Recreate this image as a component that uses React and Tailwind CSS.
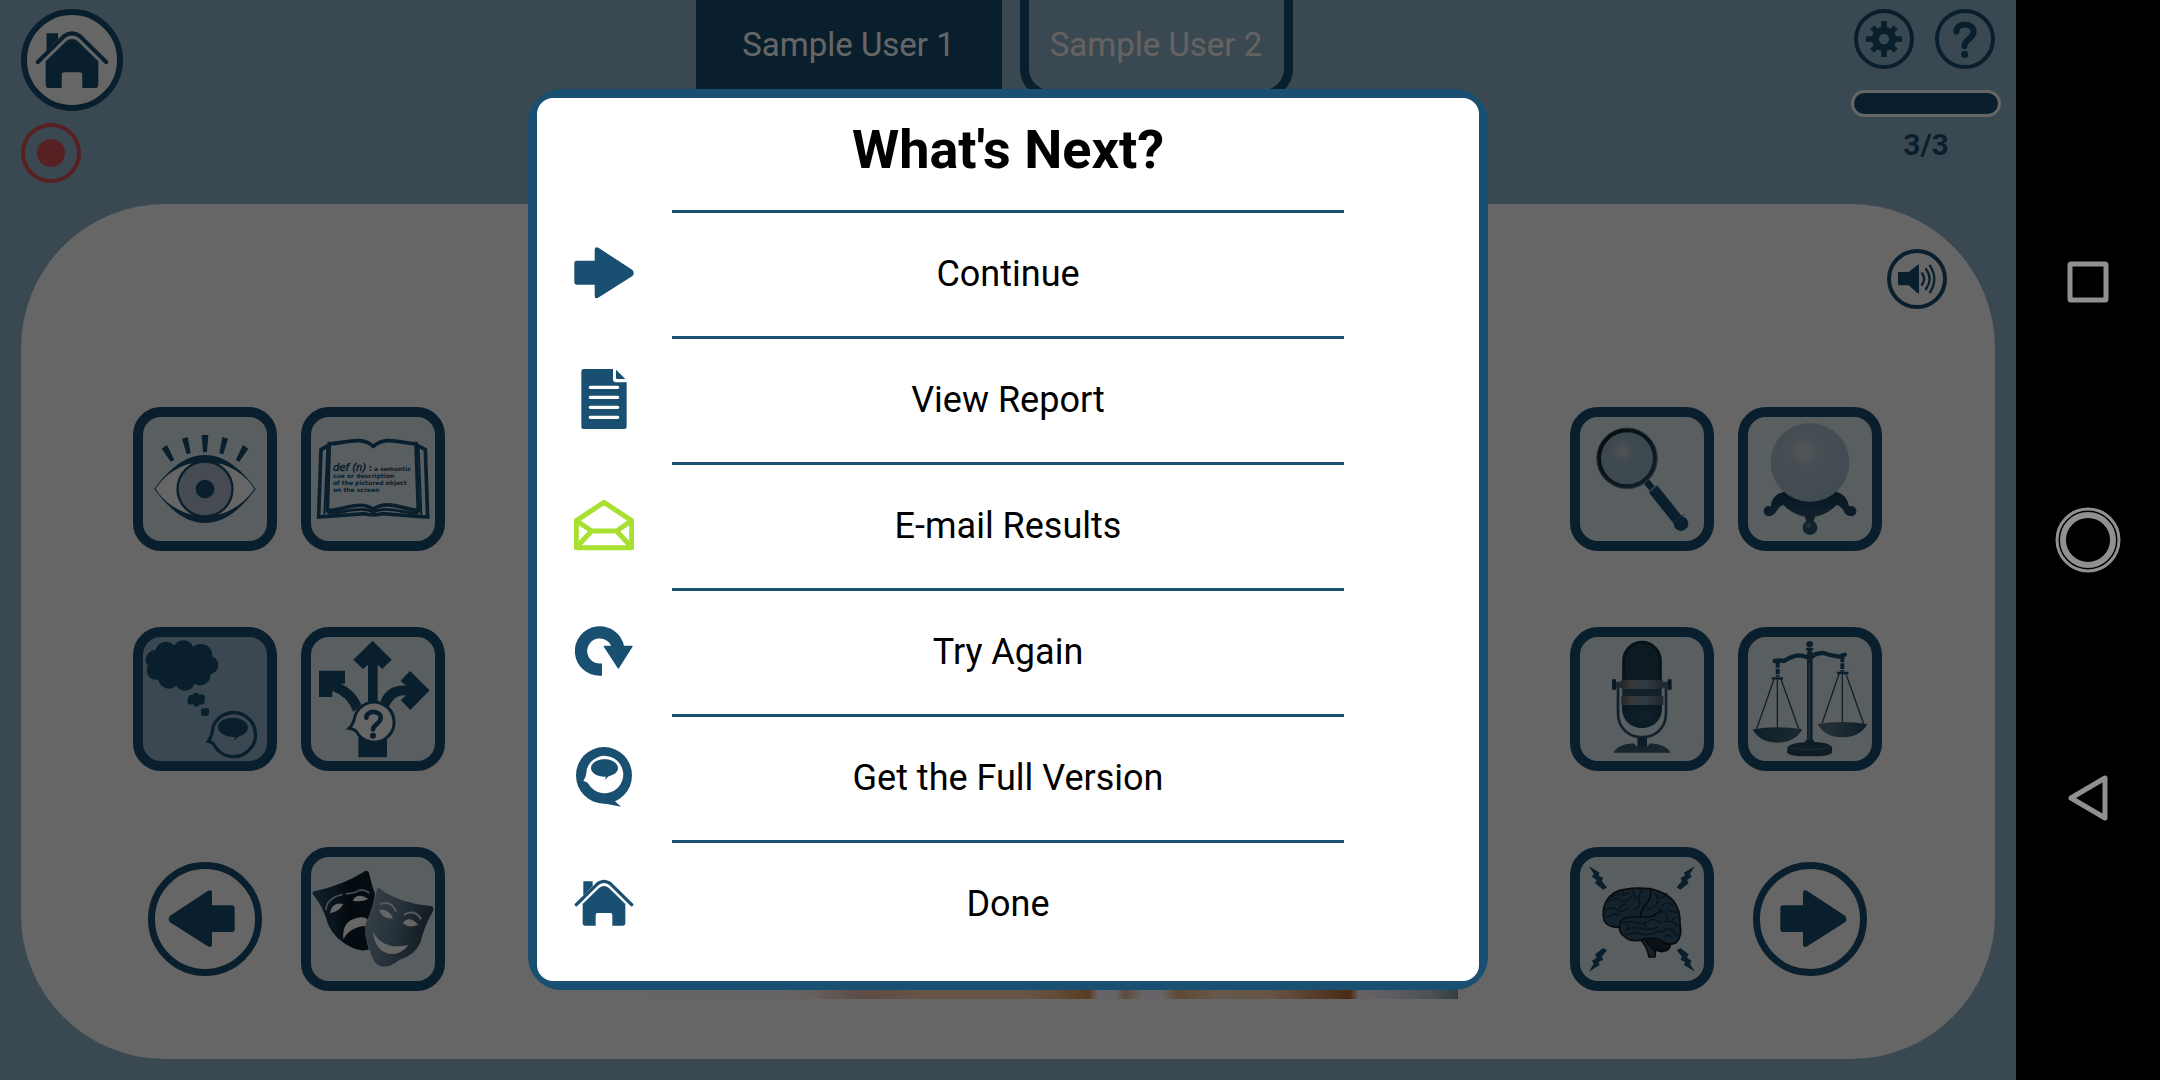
import React from "react";

const NAVY = "#194f70";

/* ---------- small icons ---------- */

function ArrowIcon({ className, viewBox }) {
  return (
    <svg viewBox={viewBox} className={className} fill={NAVY} aria-hidden="true">
      <path d="M150 257L262 184Q276 176 276 190V226H336Q344 226 344 234V298Q344 306 336 306H276V342Q276 356 262 348L150 277Q142 267 150 257Z" />
    </svg>
  );
}

function HouseIcon({ className }) {
  return (
    <svg viewBox="162 819 180 180" className={className} fill={NAVY} aria-hidden="true">
      <path d="M169 914L233 851Q252 837 271 851L335 914" fill="none" stroke={NAVY} strokeWidth="10" strokeLinecap="round" />
      <path d="M190 844H218V858L190 887Z" />
      <path d="M188 912L237 864Q252 852 267 864L316 912V970Q316 977 309 977H277V945Q277 939 271 939H233Q227 939 227 945V977H195Q188 977 188 970Z" />
    </svg>
  );
}

function ReportIcon({ className }) {
  return (
    <svg viewBox="162 447 180 180" className={className} fill={NAVY} aria-hidden="true">
      <path d="M192 447H279V478Q279 487 288 487H320V620Q320 627 313 627H192Q184 627 184 620V455Q184 447 192 447Z" />
      <path d="M288 449L316 477H291Q288 477 288 474Z" />
      <path d="M211 502H293M211 532H293M211 562H293M211 592H293" stroke="#fff" strokeWidth="10" strokeLinecap="round" />
    </svg>
  );
}

function MailIcon({ className }) {
  return (
    <svg viewBox="162 825 180 180" className={className} fill="none" stroke="#a8df30" strokeWidth="15" strokeLinejoin="round" aria-hidden="true">
      <path d="M169 902L252 847L335 902V983H169Z" />
      <path d="M169 902L215 933H290L335 902M215 933L170 981M290 933L334 981" />
    </svg>
  );
}

function RetryIcon({ className }) {
  return (
    <svg viewBox="162 63 180 180" className={className} aria-hidden="true">
      <path d="M246 209H240A56 56 0 1 1 294 142" fill="none" stroke={NAVY} strokeWidth="37" />
      <path d="M253 139H336L295 204Z" fill={NAVY} stroke={NAVY} strokeWidth="4" strokeLinejoin="round" />
    </svg>
  );
}

function ThinkHeadIcon({ className }) {
  return (
    <svg viewBox="162 441 180 180" className={className} aria-hidden="true">
      <ellipse cx="252" cy="526" rx="84" ry="85" fill={NAVY} />
      <path d="M284 603L303 620L250 610Z" fill={NAVY} />
      <path d="M200 508A56 56 0 1 1 205 551Q202 545 190 543Q200 528 200 508Z" fill="#fff" />
      <path d="M254 478C276 478 294 490 294 504S280 525 266 529L254 540L258 530C232 531 213 519 213 504S232 478 254 478Z" fill={NAVY} />
    </svg>
  );
}

function GearIcon() {
  return (
    <svg viewBox="-78 -78 156 156" className="size-full" stroke={NAVY} aria-hidden="true">
      <circle r="26" fill="none" strokeWidth="21" />
      {[0, 45, 90, 135, 180, 225, 270, 315].map((a) => (
        <path key={a} d={a % 90 ? "M0 -32V-50" : "M0 -32V-54"} strokeWidth="17" transform={`rotate(${a})`} />
      ))}
    </svg>
  );
}

function HelpIcon() {
  return (
    <svg viewBox="417 39 156 156" className="size-full" aria-hidden="true">
      <path d="M469 95C469 66 522 66 521 96C520 117 494 118 493 138" fill="none" stroke={NAVY} strokeWidth="18" strokeLinecap="round" />
      <circle cx="494" cy="163" r="11" fill={NAVY} />
    </svg>
  );
}

function SpeakerIcon() {
  return (
    <svg viewBox="273 759 156 156" className="size-full" aria-hidden="true">
      <path d="M298 816H326L353 794Q357 792 357 797V877Q357 882 353 880L326 856H298Q294 856 294 852V820Q294 816 298 816Z" fill={NAVY} />
      <path d="M366 820Q379 837 366 854M378 807Q400 837 378 867M390 797Q416 837 390 877" fill="none" stroke={NAVY} strokeWidth="7" strokeLinecap="round" />
    </svg>
  );
}

/* ---------- tile drawings ---------- */

function Eye() {
  const lashes = "M186 146L203 141L212 190L200 193ZM125 176L141 165L163 210L152 215Z";
  return (
    <svg viewBox="69 81 372 372" className="size-full" fill={NAVY} aria-hidden="true">
      <path d="M103 297C150 232 200 195 255 195S360 232 407 297C360 362 310 399 255 399S150 362 103 297Z" />
      <path d="M107 297Q140 243 207 221H303Q372 245 403 297Q365 352 300 373H210Q142 352 107 297Z" fill="#fff" />
      <circle cx="255" cy="297" r="86" />
      <circle cx="255" cy="297" r="79" fill="#adbccb" />
      <circle cx="255" cy="297" r="28" />
      <path d="M245 135H265L261 187H249Z" />
      <path d={lashes} />
      <path d={lashes} transform="matrix(-1 0 0 1 510 0)" />
    </svg>
  );
}

function Book() {
  return (
    <svg viewBox="573 81 372 372" className="size-full" aria-hidden="true">
      <g fill="none" stroke={NAVY} strokeWidth="11">
        <path d="M628 164L603 179L596 381L735 371Q759 379 785 371L923 381L916 179L888 164" />
        <path d="M628 161C670 162 722 135 760 169C798 135 850 162 888 161L895 362C850 358 800 328 760 358C720 328 670 362 622 362Z" />
        <path d="M622 172L613 374M896 172L904 374" strokeWidth="6" />
        <path d="M622 370C670 370 730 345 760 368C790 345 850 370 895 370" strokeWidth="8" />
      </g>
      <g fill={NAVY} fontFamily="'DejaVu Sans', sans-serif" fontWeight="700">
        <text x="639" y="243" fontSize="30" fontStyle="italic" fontWeight="400" stroke={NAVY} strokeWidth="1.5">def (n)</text>
        <text x="746" y="243" fontSize="24">:</text>
        <text x="762" y="243" fontSize="18">a semantic</text>
        <text x="639" y="264" fontSize="18">cue or description</text>
        <text x="639" y="286" fontSize="18">of the pictured object</text>
        <text x="639" y="307" fontSize="18">on the screen</text>
      </g>
    </svg>
  );
}

function Thought() {
  const puffs = [
    [108, 150, 31], [138, 127, 32], [190, 123, 32], [243, 136, 34], [267, 165, 28],
    [240, 194, 32], [195, 211, 31], [147, 204, 32], [108, 182, 28],
    [214, 265, 10], [228, 258, 10], [244, 264, 11], [244, 274, 10], [229, 280, 10], [212, 274, 10],
    [251, 303, 8], [260, 302, 8], [260, 311, 7], [250, 311, 7],
  ];
  return (
    <svg viewBox="69 81 372 372" className="size-full" fill={NAVY} aria-hidden="true">
      <ellipse cx="187" cy="167" rx="85" ry="50" />
      <ellipse cx="228" cy="269" rx="20" ry="12" />
      {puffs.map(([x, y, r]) => (
        <circle key={`${x}-${y}`} cx={x} cy={y} r={r} />
      ))}
      <path d="M279 350A66 66 0 1 1 284 408Q280 397 265 394Q278 374 279 350Z" fill="none" stroke={NAVY} strokeWidth="10" />
      <path d="M339 323C364 323 384 336 384 351S372 375 357 379L341 392L346 381C314 382 294 368 294 351S314 323 339 323Z" />
    </svg>
  );
}

function Choices() {
  return (
    <svg viewBox="573 81 372 372" className="size-full" fill={NAVY} aria-hidden="true">
      <path d="M758 92L815 149L787 177L773 164V290H744V164L729 177L700 149Z" />
      <path d="M597 182H675V221H662Q704 238 724 284L700 306Q682 258 637 243V261H597Z" />
      <path d="M870 183L929 241L871 300L842 271L858 256Q822 252 804 296L782 272Q802 224 858 227L842 212Z" />
      <path d="M715 370H801V442H715Z" />
      <path d="M705 318A60 60 0 1 1 710 366Q704 358 687 355Q702 340 705 318Z" fill="#fff" stroke={NAVY} strokeWidth="9" />
      <path d="M739 323C739 300 783 300 782 324C781 342 760 343 759 358" fill="none" stroke={NAVY} strokeWidth="14" strokeLinecap="round" />
      <circle cx="759" cy="377" r="9" />
    </svg>
  );
}

function Masks() {
  return (
    <svg viewBox="573 81 372 372" className="size-full" aria-hidden="true">
      <defs>
        <linearGradient id="sad" x1="0" x2="1">
          <stop offset="0" stopColor="#2b5570" />
          <stop offset=".6" stopColor="#0a1a26" />
          <stop offset="1" stopColor="#0a2433" />
        </linearGradient>
        <linearGradient id="glad" x1="0" x2="1" y1="0" y2=".3">
          <stop offset="0" stopColor="#8fa6b5" />
          <stop offset=".5" stopColor="#648197" />
          <stop offset="1" stopColor="#2f4453" />
        </linearGradient>
      </defs>
      <path d="M578 192Q575 184 586 183Q670 165 736 123Q745 120 748 132Q754 162 765 192Q764 220 738 280Q733 320 747 358Q728 366 700 355Q645 330 625 285Q610 230 578 192Z" fill="url(#sad)" />
      <g fill="#fff">
        <path d="M630 250Q635 215 670 222Q660 243 630 250Z" />
        <path d="M698 212Q712 185 745 207Q724 217 698 212Z" />
        <path d="M670 328Q664 268 722 262Q742 262 741 270L738 288Q690 290 670 328Z" />
        <path d="M618 240Q618 205 668 193M677 191Q700 192 718 181Q738 178 748 190" fill="none" stroke="#b4c4cf" strokeWidth="5" />
      </g>
      <path d="M770 178Q776 168 788 182Q840 218 932 228Q944 230 939 244Q914 286 902 335Q888 372 838 390Q808 414 782 409Q758 400 750 362Q728 310 738 278Q766 226 770 178Z" fill="url(#glad)" />
      <g fill="#fff">
        <path d="M777 240Q805 234 819 265Q788 268 777 240Z" />
        <path d="M848 280Q866 254 894 284Q868 296 848 280Z" />
        <path d="M759 305Q790 362 865 345Q845 373 812 372Q765 365 759 305Z" />
        <path d="M780 222Q815 210 828 245M852 254Q885 236 903 268" fill="none" stroke="#d5dfe6" strokeWidth="6" />
      </g>
    </svg>
  );
}

function Magnifier() {
  return (
    <svg viewBox="90 81 372 372" className="size-full" aria-hidden="true">
      <defs>
        <radialGradient id="lens" cx=".42" cy=".38" r=".22">
          <stop offset="0" stopColor="#cdd3d7" />
          <stop offset="1" stopColor="#98b4c5" />
        </radialGradient>
        <linearGradient id="rim" x1="0" x2="1" y1="0" y2="1">
          <stop offset="0" stopColor="#0b1d29" />
          <stop offset="1" stopColor="#2d5069" />
        </linearGradient>
      </defs>
      <circle cx="231" cy="205" r="84" fill="url(#lens)" stroke="url(#rim)" strokeWidth="12" />
      <circle cx="231" cy="205" r="91" fill="none" stroke="#5d7382" strokeWidth="3" />
      <path d="M290 275L306 295" stroke={NAVY} strokeWidth="20" />
      <path d="M310 298L390 398" stroke={NAVY} strokeWidth="33" />
      <circle cx="393" cy="401" r="22" fill={NAVY} />
      <path d="M298 305L322 286M370 398L403 373" stroke="#2a5c7b" strokeWidth="3" />
    </svg>
  );
}

function CrystalBall() {
  return (
    <svg viewBox="594 81 372 372" className="size-full" aria-hidden="true">
      <defs>
        <radialGradient id="ball" cx=".43" cy=".36" r=".65">
          <stop offset="0" stopColor="#ced5d9" />
          <stop offset=".15" stopColor="#c6d0d6" />
          <stop offset=".28" stopColor="#aec3cf" />
          <stop offset="1" stopColor="#a3bdcc" />
        </radialGradient>
        <linearGradient id="stand" x1="0" x2="0" y1="0" y2="1">
          <stop offset="0" stopColor="#123c57" />
          <stop offset="1" stopColor="#2a4f68" />
        </linearGradient>
      </defs>
      <path d="M697 340Q780 420 863 340" fill="none" stroke="#53717f" strokeWidth="4" />
      <path d="M703 305Q780 345 857 305Q890 312 897 348L919 362Q918 378 903 378Q885 378 880 360Q868 345 858 345Q830 378 780 378T702 345Q692 345 682 360Q672 378 657 378Q642 377 641 362Q645 350 662 350Q665 314 703 305Z" fill="url(#stand)" />
      <path d="M760 360H800L790 400H770Z" fill="#2b4d64" />
      <circle cx="780" cy="413" r="22" fill="#2b5470" />
      <circle cx="776" cy="406" r="8" fill="#55788f" />
      <circle cx="656" cy="363" r="15" fill="#1f4a66" />
      <circle cx="904" cy="363" r="15" fill="#1f4a66" />
      <circle cx="780" cy="217" r="118" fill="url(#ball)" />
    </svg>
  );
}

function Microphone() {
  return (
    <svg viewBox="90 81 372 372" className="size-full" aria-hidden="true">
      <defs>
        <pattern id="mesh" width="8" height="8" patternUnits="userSpaceOnUse">
          <rect width="8" height="8" fill="#2c485a" />
          <path d="M0 0L8 8M8 0L0 8" stroke="#16384d" strokeWidth="2" />
        </pattern>
        <linearGradient id="band" x1="0" x2="1">
          <stop offset="0" stopColor="#58616a" />
          <stop offset=".25" stopColor="#8a8f93" />
          <stop offset=".6" stopColor="#7390a1" />
          <stop offset="1" stopColor="#56636d" />
        </linearGradient>
        <radialGradient id="bowl" cx=".5" cy=".5" r=".6">
          <stop offset="0" stopColor="#2e5068" />
          <stop offset="1" stopColor="#16405b" />
        </radialGradient>
      </defs>
      <path d="M204 225V310C204 405 348 405 348 310V225" fill="none" stroke="#2d536c" strokeWidth="8" />
      <path d="M186 208H198V239H186ZM353 208H365V239H353Z" fill="#153f59" />
      <path d="M198 215H220V233H198ZM334 215H354V233H334Z" fill="#4d6a7c" />
      <path d="M221 212V152A55 55 0 0 1 331 152V212Z" fill="url(#mesh)" stroke="#102f43" strokeWidth="9" />
      <path d="M216 284H336V294C336 374 216 374 216 294Z" fill="url(#bowl)" />
      <path d="M217 236H335V260H217Z" fill="#2b5168" />
      <path d="M214 209H338V237H214ZM214 258H340V285H214Z" fill="url(#band)" />
      <path d="M262 384H291V412H262Z" fill="#25475d" />
      <path d="M191 428Q200 404 250 400L262 410H291L300 400Q350 404 361 428Z" fill="#3a5d72" />
    </svg>
  );
}

function Scales() {
  return (
    <svg viewBox="594 81 372 372" className="size-full" aria-hidden="true">
      <defs>
        <linearGradient id="pan" x1="0" x2="1">
          <stop offset="0" stopColor="#234c66" />
          <stop offset=".65" stopColor="#5b7688" />
          <stop offset="1" stopColor="#234c66" />
        </linearGradient>
      </defs>
      <g fill="none" stroke={NAVY}>
        <path d="M674 153Q690 150 702 153Q725 138 745 136Q765 136 779 146Q795 128 820 129Q845 138 868 140L884 134" strokeWidth="13" strokeLinecap="round" />
        <path d="M683 156V200M877 140V185" strokeWidth="12" strokeDasharray="17 3" />
        <path d="M665 205H699M861 189H895" strokeWidth="7" />
        <path d="M673 205L620 356M682 205V374M692 205L746 356" strokeWidth="4" stroke="#2d5167" />
        <path d="M868 189L816 341M877 189V360M887 189L941 341" strokeWidth="4" stroke="#2d5167" />
      </g>
      <path d="M771 125H788V400H771Z" fill="#27506a" />
      <path d="M778 160V395" stroke="#5b798c" strokeWidth="4" />
      <circle cx="779" cy="103" r="10" fill={NAVY} />
      <path d="M768 114H790V121H768ZM773 121H785V130H773ZM766 390H792V402H766Z" fill={NAVY} />
      <path d="M608 358Q682 346 757 358Q735 398 682 398T608 358ZM803 342Q877 330 952 342Q930 382 877 382T803 342Z" fill="url(#pan)" />
      <path d="M713 412Q722 397 779 396T846 412V428Q840 439 779 439T711 428Z" fill="#234760" />
      <path d="M720 412Q779 426 838 412" fill="none" stroke="#4d6b7e" strokeWidth="4" />
    </svg>
  );
}

function Brain() {
  const bolt = "M116 108L149 128L146 137L159 143L156 154L171 172L160 179L135 160L140 150L126 141L131 131Z";
  return (
    <svg viewBox="90 81 372 372" className="size-full" aria-hidden="true">
      <g fill={NAVY}>
        <path d={bolt} />
        <path d={bolt} transform="matrix(-1 0 0 1 551 0)" />
        <path d={bolt} transform="matrix(1 0 0 -1 0 533)" />
        <path d={bolt} transform="matrix(-1 0 0 -1 551 533)" />
      </g>
      <g stroke="#17191c" strokeWidth="5" strokeLinejoin="round" strokeLinecap="round">
        <path d="M270 328Q290 345 297 381H315L316 364L290 325Z" fill="#31566f" />
        <path d="M285 325Q300 362 335 365Q362 362 362 338L340 318Z" fill="#202c36" />
        <path d="M208 292Q170 292 162 270Q155 240 168 215Q185 182 225 178Q255 172 300 176Q350 188 370 212Q392 240 390 280Q398 320 378 338Q355 350 330 330Q300 318 275 330Q240 338 222 318Q208 310 208 292Z" fill="#31566f" />
        <path d="M208 290Q208 262 245 261H300Q325 252 332 238M270 258Q278 232 290 220Q304 205 302 180" fill="none" />
      </g>
      <g fill="none" stroke="#192c3a" strokeWidth="4" strokeLinecap="round">
        <path d="M175 215Q192 200 210 210T245 200M185 200Q205 190 225 195M165 240Q185 228 200 240T235 232M170 262Q190 248 208 255M205 240Q210 225 228 222M250 180Q248 200 262 206M275 182Q262 200 268 215T250 240M218 182Q220 196 236 188" />
        <path d="M312 190Q330 200 320 220M320 205Q345 205 350 190M335 225Q355 215 368 225M325 250Q350 235 350 262T375 262M290 235Q310 238 318 225M355 240Q365 250 386 245M345 275Q365 270 385 288M340 300Q360 290 370 305T388 312M365 320Q355 312 345 320" />
        <path d="M218 280Q240 270 260 278T305 268Q325 270 335 280M225 300Q250 288 275 296T325 290M232 315Q255 305 275 312T320 305Q335 308 345 300M235 285V300M285 280V290" />
      </g>
    </svg>
  );
}

/* ---------- layout pieces ---------- */

function Tile({ label, children, className = "bg-[#dfebf0]" }) {
  return (
    <button aria-label={label} className={`size-36 overflow-hidden rounded-[28px] border-10 border-[#194f70] ${className}`}>
      {children}
    </button>
  );
}

function RoundButton({ label, children }) {
  return (
    <button aria-label={label} className="size-15 shrink-0 rounded-full border-4 border-[#194f70]">
      {children}
    </button>
  );
}

function StepButton({ label, flip = false }) {
  return (
    <button aria-label={label} className="size-[114px] place-self-center rounded-full border-7 border-[#194f70]">
      <ArrowIcon viewBox="105 117 300 300" className={flip ? "size-full -scale-x-100" : "size-full"} />
    </button>
  );
}

const menu = [
  { label: "Continue", icon: <ArrowIcon viewBox="145 167 200 200" className="size-15 -scale-x-100" /> },
  { label: "View Report", icon: <ReportIcon className="size-15" /> },
  { label: "E-mail Results", icon: <MailIcon className="size-15" /> },
  { label: "Try Again", icon: <RetryIcon className="size-15" /> },
  { label: "Get the Full Version", icon: <ThinkHeadIcon className="size-15" /> },
  { label: "Done", icon: <HouseIcon className="size-15" /> },
];

function Header() {
  return (
    <header className="flex h-[204px] items-start pl-[21px] pr-[15px]">
      <div className="flex flex-col gap-3 pt-[9px]">
        <button aria-label="Home" className="grid size-[102px] place-items-center rounded-full border-6 border-[#194f70] bg-white">
          <HouseIcon className="size-[74px]" />
        </button>
        <button aria-label="Record" className="grid size-15 place-items-center rounded-full border-4 border-[#da5055]">
          <span className="size-7 rounded-full bg-[#da5055]" />
        </button>
      </div>
      <nav className="flex flex-1 items-start justify-center gap-[18px] pl-3.5 text-[33px] leading-[90px]">
        <button className="w-[306px] bg-[#194f70] text-white">Sample User 1</button>
        <button className="flex h-[99px] w-[273px] justify-center whitespace-nowrap rounded-b-[30px] border-9 border-t-0 border-[#194f70] text-[#fff5f2]">
          Sample User 2
        </button>
      </nav>
      <div className="w-[150px] pt-[9px]">
        <div className="flex gap-[21px] pl-[3px]">
          <RoundButton label="Settings"><GearIcon /></RoundButton>
          <RoundButton label="Help"><HelpIcon /></RoundButton>
        </div>
        <div
          role="progressbar"
          aria-label="Progress"
          aria-valuenow={3}
          aria-valuemax={3}
          className="mt-[21px] h-[27px] rounded-full border-3 border-white bg-[#194f70]"
        />
        <p className="mt-2.5 text-center text-[30px] font-bold leading-9 text-[#194f70]">3/3</p>
      </div>
    </header>
  );
}

function Board() {
  return (
    <main className="mx-[21px] mb-[21px] flex flex-1 flex-col rounded-[144px] bg-white">
      <div className="flex justify-end pr-12 pt-[45px]">
        <RoundButton label="Play sound"><SpeakerIcon /></RoundButton>
      </div>
      <div className="mt-[15px] flex items-end justify-between pb-15 pl-28 pr-[113px]">
        <div className="grid grid-cols-2 gap-x-6 gap-y-[76px] pb-2">
          <Tile label="Looks like"><Eye /></Tile>
          <Tile label="Definition"><Book /></Tile>
          <Tile label="Think about" className="bg-[#94b4ca]"><Thought /></Tile>
          <Tile label="Choices"><Choices /></Tile>
          <StepButton label="Previous" />
          <Tile label="Act out"><Masks /></Tile>
        </div>
        <div
          role="img"
          aria-label="Picture to name"
          className="aspect-[4/3] w-[900px] bg-[linear-gradient(90deg,#fff_0%,#fffbff_25%,#fff0eb_28%,#e6beaa_34%,#ffd2b4_40%,#ffd2b4_52%,#f0b482_56%,#e39655_59%,#fffaff_60%,#fffaff_62%,#e6be9c_63%,#fffaff_65%,#fffaff_67%,#eeb480_69%,#ffdcbe_73%,#ffd2b4_79%,#b96e32_88%,#fff5ff_89%,#e8e6f0_93%,#b9c8d2_97%,#849da5_100%)]"
        />
        <div className="grid grid-cols-2 gap-x-6 gap-y-[76px] pb-2">
          <Tile label="Search"><Magnifier /></Tile>
          <Tile label="Predict"><CrystalBall /></Tile>
          <Tile label="Say"><Microphone /></Tile>
          <Tile label="Compare"><Scales /></Tile>
          <Tile label="Recall"><Brain /></Tile>
          <StepButton label="Next" flip />
        </div>
      </div>
    </main>
  );
}

function NextDialog() {
  return (
    <div className="absolute inset-0 flex items-center justify-center bg-black/60 pb-0.5">
      <section role="dialog" aria-labelledby="next-title" className="w-[960px] rounded-[33px] bg-[#194f70] p-[9px]">
        <div className="rounded-2xl bg-white pb-[15px]">
          <h1 id="next-title" className="h-28 text-center text-[54px] font-bold leading-[104px]">What's Next?</h1>
          <ul>
            {menu.map(({ label, icon }) => (
              <li key={label}>
                <button className="grid h-[126px] w-full grid-cols-[135px_1fr_135px] items-center text-4xl">
                  <span className="flex justify-center pr-0.5">{icon}</span>
                  <span className="flex h-full items-center justify-center border-t-3 border-[#194f70]">{label}</span>
                </button>
              </li>
            ))}
          </ul>
        </div>
      </section>
    </div>
  );
}

function SystemBar() {
  return (
    <aside className="flex w-36 flex-col items-center justify-around bg-black py-[153px] text-[#909090]">
      <button aria-label="Recent apps">
        <svg viewBox="0 0 72 72" className="size-18" fill="none" stroke="currentColor" strokeWidth="5" aria-hidden="true">
          <rect x="18" y="18" width="36" height="36" rx="1" />
        </svg>
      </button>
      <button aria-label="Home screen">
        <svg viewBox="0 0 72 72" className="size-18" fill="none" stroke="currentColor" aria-hidden="true">
          <circle cx="36" cy="36" r="31" strokeWidth="3" />
          <circle cx="36" cy="36" r="25" strokeWidth="6" />
        </svg>
      </button>
      <button aria-label="Back">
        <svg viewBox="0 0 72 72" className="size-18" fill="none" stroke="currentColor" strokeWidth="5" strokeLinejoin="round" aria-hidden="true">
          <path d="M53 16V56L19 36Z" />
        </svg>
      </button>
    </aside>
  );
}

export default function App() {
  return (
    <div className="flex min-h-screen font-[Roboto,sans-serif] text-black">
      <div className="relative flex flex-1 flex-col bg-[#92b7cb]">
        <Header />
        <Board />
        <NextDialog />
      </div>
      <SystemBar />
    </div>
  );
}
